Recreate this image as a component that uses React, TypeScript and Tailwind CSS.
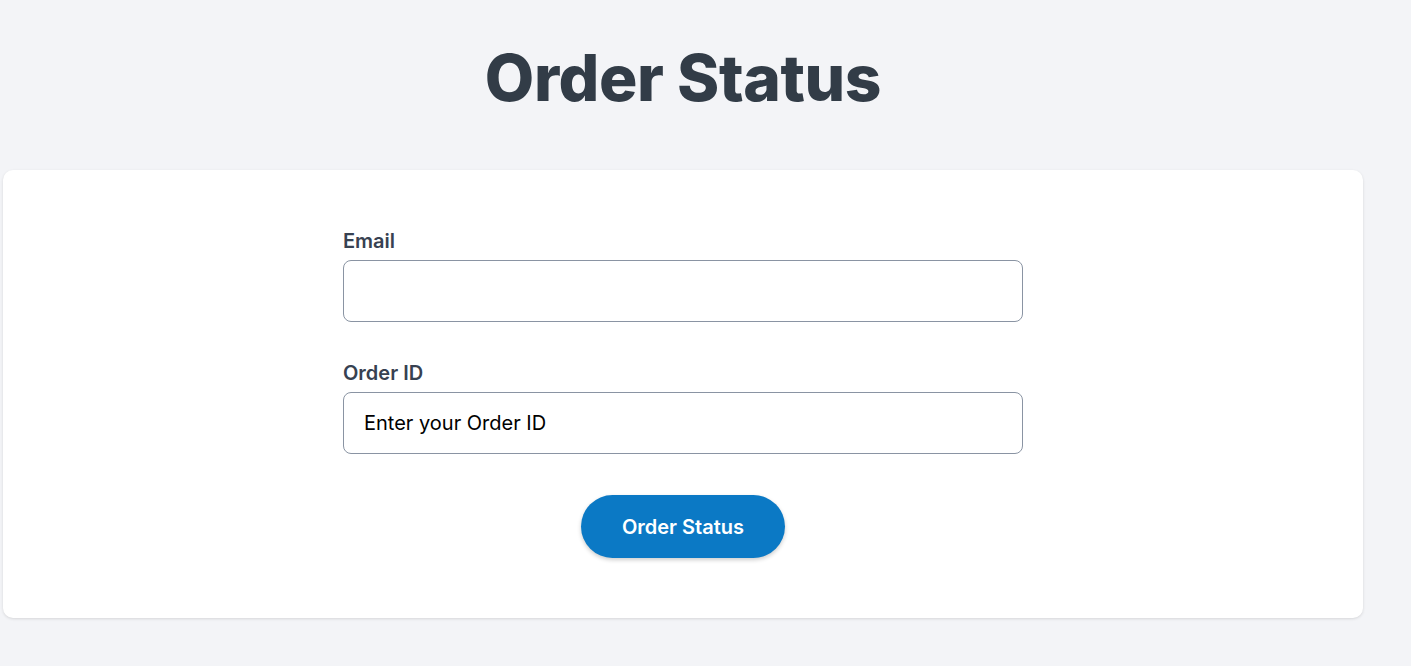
export default function App() {
  return (
    <div className="min-h-[666px] bg-[#f3f4f7] font-['Inter',sans-serif]">
      <div className="w-[1366px]">
        {/* Page heading */}
        <h1 className="pt-[38px] pb-[52px] text-center text-[64px] leading-[80px] font-extrabold tracking-[-0.4px] text-[#323c47]">
          Order Status
        </h1>

        {/* Card */}
        <div className="mx-[3px] rounded-[10px] bg-white pt-[60px] pb-[60px] shadow-[0_1px_3px_rgba(0,0,0,0.12)]">
          <form className="mx-auto flex w-[680px] flex-col">
            <label className="text-[20px] leading-[22px] font-semibold text-[#374151]">Email</label>
            <input
              type="email"
              className="mt-[8px] h-[62px] rounded-[8px] border border-[#8a94a3] px-[20px] text-[20px] text-black outline-none"
            />

            <label className="mt-[40px] text-[20px] leading-[22px] font-semibold text-[#374151]">Order ID</label>
            <input
              type="text"
              placeholder="Enter your Order ID"
              className="mt-[8px] h-[62px] rounded-[8px] border border-[#8a94a3] px-[20px] text-[20px] text-black outline-none placeholder:text-black"
            />

            <button
              type="button"
              className="mx-auto mt-[41px] h-[63px] w-[204px] rounded-full bg-[#0b79c5] text-[20px] font-semibold text-white shadow-[0_2px_4px_rgba(0,0,0,0.2)]"
            >
              Order Status
            </button>
          </form>
        </div>
      </div>
    </div>
  );
}
